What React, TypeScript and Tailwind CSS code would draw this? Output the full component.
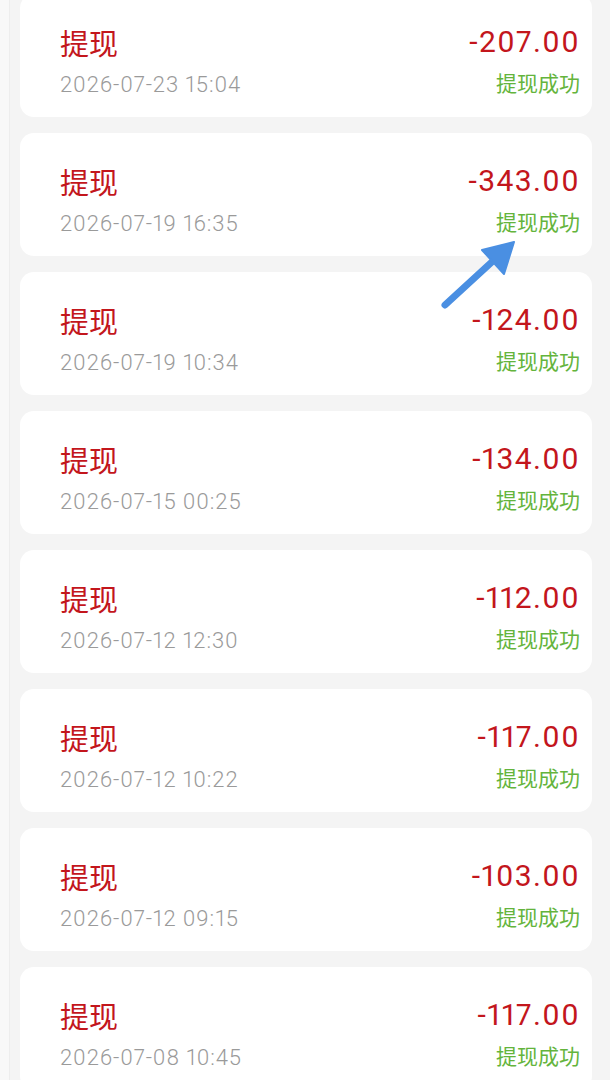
import React from "react";

const rows = [
  { amt: "-207.00", date: "2026-07-23 15:04" },
  { amt: "-343.00", date: "2026-07-19 16:35" },
  { amt: "-124.00", date: "2026-07-19 10:34" },
  { amt: "-134.00", date: "2026-07-15 00:25" },
  { amt: "-112.00", date: "2026-07-12 12:30" },
  { amt: "-117.00", date: "2026-07-12 10:22" },
  { amt: "-103.00", date: "2026-07-12 09:15" },
  { amt: "-117.00", date: "2026-07-08 10:45" },
];

export default function App() {
  return (
    <div className="relative w-[610px] h-[1080px] overflow-hidden bg-[#f4f4f4] font-['Roboto','Noto_Sans_CJK_SC',sans-serif]">
      <div className="absolute left-0 top-0 h-full w-[10px] bg-[#f8f8f8] border-r border-[#ededed]" />
      <div className="flex flex-col gap-[16px] pl-[20px] pr-[18px] mt-[-6px]">
        {rows.map((r, i) => (
          <div
            key={i}
            className="h-[123px] bg-white rounded-[14px] pl-[40px] pr-[12px] flex flex-col pt-[31px]"
          >
            <div className="flex items-center justify-between h-[34px]">
              <span className="text-[29px] leading-none text-[#c3161c] font-['Noto_Sans_CJK_SC',sans-serif]">提现</span>
              <span className="text-[30px] leading-none text-[#c3161c] tracking-[1.4px] proportional-nums">{r.amt}</span>
            </div>
            <div className="flex items-center justify-between h-[28px] mt-[12px]">
              <span className="text-[22px] leading-none font-light text-[#9a9a9a] tracking-[0.9px] proportional-nums">{r.date}</span>
              <span className="text-[21px] leading-none text-[#64b43c] mb-[6px] font-['Noto_Sans_CJK_SC',sans-serif]">提现成功</span>
            </div>
          </div>
        ))}
      </div>
      <svg className="absolute left-[436px] top-[234px]" width="90" height="80" viewBox="0 0 90 80">
        <line x1="9" y1="71" x2="58" y2="26" stroke="#4a8fe2" strokeWidth="7" strokeLinecap="round" />
        <polygon points="78,8 46,16 68,40" fill="#4a8fe2" strokeLinejoin="round" stroke="#4a8fe2" strokeWidth="2" />
      </svg>
    </div>
  );
}
